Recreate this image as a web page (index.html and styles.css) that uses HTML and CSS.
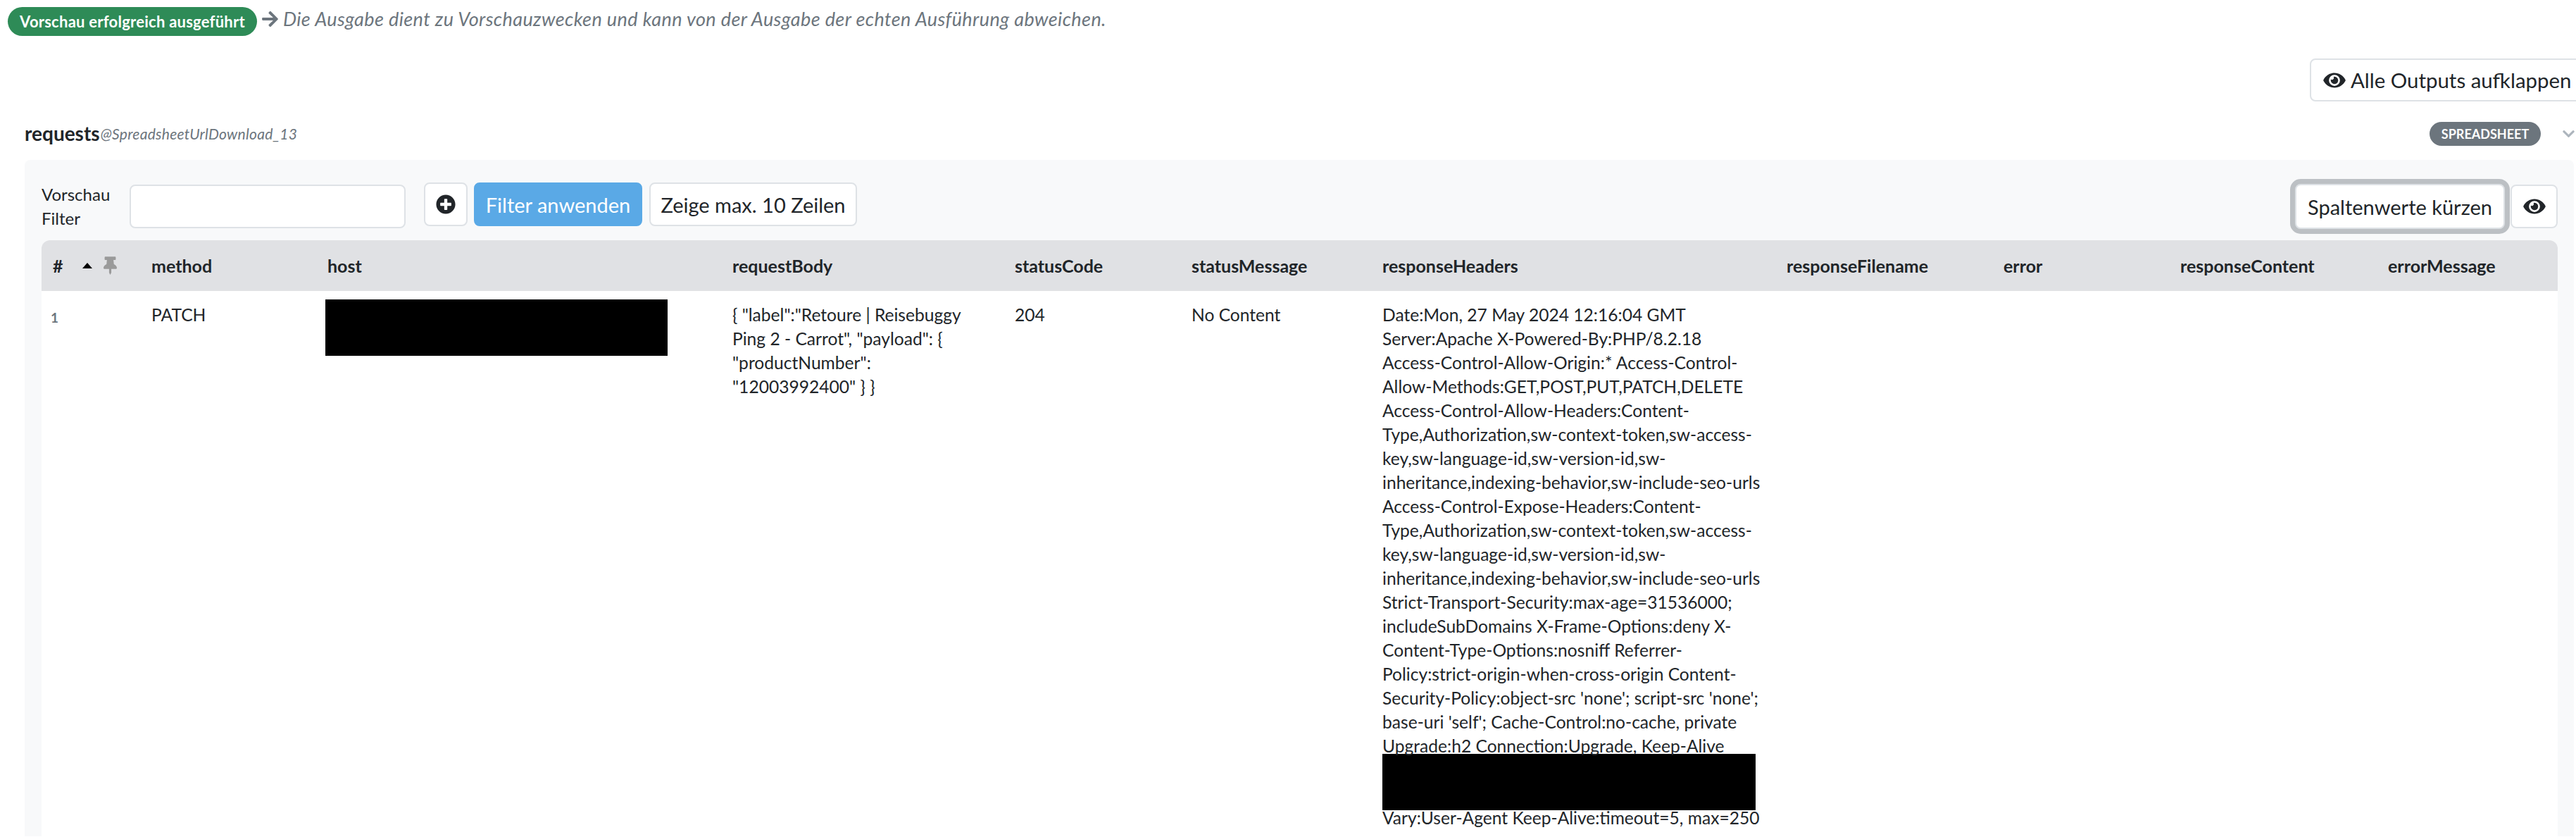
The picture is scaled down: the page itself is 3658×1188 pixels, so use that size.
FILE: index.html
```html
<!DOCTYPE html>
<html lang="de">
<head>
    <meta charset="UTF-8">
    <title>Vorschau</title>
    <link rel="stylesheet" href="styles.css">
</head>
<body>
    <div class="status-row">
        <span class="status-badge">Vorschau erfolgreich ausgeführt</span>
        <svg class="arrow-icon" viewBox="0 0 448 512"><path d="M190.5 66.9l22.2-22.2c9.4-9.4 24.6-9.4 33.9 0L441 239c9.4 9.4 9.4 24.6 0 33.9L246.6 467.3c-9.4 9.4-24.6 9.4-33.9 0l-22.2-22.2c-9.5-9.5-9.3-25 .4-34.3L311.4 296H24c-13.3 0-24-10.7-24-24v-32c0-13.3 10.7-24 24-24h287.4L190.9 101.2c-9.8-9.3-10-24.8-.4-34.3z"/></svg>
        <span class="status-note">Die Ausgabe dient zu Vorschauzwecken und kann von der Ausgabe der echten Ausführung abweichen.</span>
    </div>

    <div class="outputs-row">
        <button class="btn btn-outputs">
            <svg class="eye-icon" viewBox="0 0 576 512"><path d="M572.52 241.4C518.29 135.59 410.93 64 288 64S57.68 135.64 3.48 241.41a32.35 32.35 0 0 0 0 29.19C57.71 376.41 165.07 448 288 448s230.32-71.64 284.52-177.41a32.35 32.35 0 0 0 0-29.19zM288 400a144 144 0 1 1 144-144 143.93 143.93 0 0 1-144 144zm0-240a95.31 95.31 0 0 0-25.31 3.79 47.85 47.85 0 0 1-66.9 66.9A95.78 95.78 0 1 0 288 160z"/></svg>
            Alle Outputs aufklappen
        </button>
    </div>

    <div class="output-title">
        <span class="output-name">requests</span>
        <span class="output-id">@SpreadsheetUrlDownload_13</span>
        <span class="type-badge">SPREADSHEET</span>
        <svg class="chevron-icon" viewBox="0 0 448 512"><path d="M207.029 381.476L12.686 187.132c-9.373-9.373-9.373-24.569 0-33.941l22.667-22.667c9.357-9.357 24.522-9.375 33.901-.04L224 284.505l154.745-154.021c9.379-9.335 24.544-9.317 33.901.04l22.667 22.667c9.373 9.373 9.373 24.569 0 33.941L240.971 381.476c-9.373 9.372-24.569 9.372-33.942 0z"/></svg>
    </div>

    <div class="panel">
        <div class="filter-bar">
            <label class="filter-label">Vorschau<br>Filter</label>
            <input type="text" class="filter-input">
            <button class="btn btn-plus">
                <svg class="plus-icon" viewBox="0 0 512 512"><path d="M256 8C119 8 8 119 8 256s111 248 248 248 248-111 248-248S393 8 256 8zm144 276c0 6.6-5.4 12-12 12h-92v92c0 6.6-5.4 12-12 12h-56c-6.6 0-12-5.4-12-12v-92h-92c-6.6 0-12-5.4-12-12v-56c0-6.6 5.4-12 12-12h92v-92c0-6.6 5.4-12 12-12h56c6.6 0 12 5.4 12 12v92h92c6.6 0 12 5.4 12 12v56z"/></svg>
            </button>
            <button class="btn btn-apply">Filter anwenden</button>
            <button class="btn btn-limit">Zeige max. 10 Zeilen</button>
            <button class="btn btn-shorten">Spaltenwerte kürzen</button>
            <button class="btn btn-eye">
                <svg class="eye-icon" viewBox="0 0 576 512"><path d="M572.52 241.4C518.29 135.59 410.93 64 288 64S57.68 135.64 3.48 241.41a32.35 32.35 0 0 0 0 29.19C57.71 376.41 165.07 448 288 448s230.32-71.64 284.52-177.41a32.35 32.35 0 0 0 0-29.19zM288 400a144 144 0 1 1 144-144 143.93 143.93 0 0 1-144 144zm0-240a95.31 95.31 0 0 0-25.31 3.79 47.85 47.85 0 0 1-66.9 66.9A95.78 95.78 0 1 0 288 160z"/></svg>
            </button>
        </div>

        <table class="data-table">
            <colgroup>
                <col class="col-index">
                <col class="col-method">
                <col class="col-host">
                <col class="col-body">
                <col class="col-code">
                <col class="col-message">
                <col class="col-headers">
                <col class="col-filename">
                <col class="col-error">
                <col class="col-content">
                <col class="col-errormsg">
            </colgroup>
            <thead>
                <tr>
                    <th>
                        <div class="index-head">
                            <span>#</span>
                            <span class="sort-up"></span>
                            <svg class="pin-icon" viewBox="0 0 384 512"><path d="M298.028 214.267L285.793 96H328c13.255 0 24-10.745 24-24V24c0-13.255-10.745-24-24-24H56C42.745 0 32 10.745 32 24v48c0 13.255 10.745 24 24 24h42.207L85.972 214.267C37.465 236.82 0 277.261 0 328c0 13.255 10.745 24 24 24h136v104.007c0 1.242.289 2.467.845 3.578l24 48c2.941 5.882 11.364 5.893 14.311 0l24-48a8.008 8.008 0 0 0 .845-3.578V352h136c13.255 0 24-10.745 24-24-.001-51.183-37.983-91.42-85.973-113.733z"/></svg>
                        </div>
                    </th>
                    <th>method</th>
                    <th>host</th>
                    <th>requestBody</th>
                    <th>statusCode</th>
                    <th>statusMessage</th>
                    <th>responseHeaders</th>
                    <th>responseFilename</th>
                    <th>error</th>
                    <th>responseContent</th>
                    <th>errorMessage</th>
                </tr>
            </thead>
            <tbody>
                <tr>
                    <td class="row-index">1</td>
                    <td>PATCH</td>
                    <td><div class="redacted redacted-host"></div></td>
                    <td>{ "label":"Retoure | Reisebuggy<br>Ping 2 - Carrot", "payload": {<br>"productNumber":<br>"12003992400" } }</td>
                    <td>204</td>
                    <td>No Content</td>
                    <td>
                        Date:Mon, 27 May 2024 12:16:04 GMT<br>
                        Server:Apache X-Powered-By:PHP/8.2.18<br>
                        Access-Control-Allow-Origin:* Access-Control-<br>
                        Allow-Methods:GET,POST,PUT,PATCH,DELETE<br>
                        Access-Control-Allow-Headers:Content-<br>
                        Type,Authorization,sw-context-token,sw-access-<br>
                        key,sw-language-id,sw-version-id,sw-<br>
                        inheritance,indexing-behavior,sw-include-seo-urls<br>
                        Access-Control-Expose-Headers:Content-<br>
                        Type,Authorization,sw-context-token,sw-access-<br>
                        key,sw-language-id,sw-version-id,sw-<br>
                        inheritance,indexing-behavior,sw-include-seo-urls<br>
                        Strict-Transport-Security:max-age=31536000;<br>
                        includeSubDomains X-Frame-Options:deny X-<br>
                        Content-Type-Options:nosniff Referrer-<br>
                        Policy:strict-origin-when-cross-origin Content-<br>
                        Security-Policy:object-src 'none'; script-src 'none';<br>
                        base-uri 'self'; Cache-Control:no-cache, private<br>
                        Upgrade:h2 Connection:Upgrade, Keep-Alive
                        <div class="redacted redacted-headers"></div>
                        Vary:User-Agent Keep-Alive:timeout=5, max=250
                    </td>
                    <td></td>
                    <td></td>
                    <td></td>
                    <td></td>
                </tr>
            </tbody>
        </table>
    </div>
</body>
</html>
```

FILE: styles.css
```css
* {
    box-sizing: border-box;
}

html, body {
    margin: 0;
    height: 1188px;
    overflow: hidden;
}

body {
    background: #fff;
    color: #212529;
    font-family: "Lato", "Open Sans", sans-serif;
    font-size: 25px;
    line-height: 34px;
}

/* status line */
.status-row {
    display: flex;
    align-items: center;
    height: 41px;
    margin: 10px 0 0 11px;
}

.status-badge {
    display: block;
    width: 354px;
    height: 41px;
    background: #2e8b57;
    color: #fff;
    border-radius: 21px;
    font-size: 22px;
    font-weight: 700;
    letter-spacing: 0.25px;
    line-height: 41px;
    text-align: center;
    white-space: nowrap;
}

.arrow-icon {
    width: 23px;
    height: 26px;
    margin: -7px 0 0 7px;
    fill: #6c757d;
}

.status-note {
    margin: -7px 0 0 7px;
    color: #6c757d;
    font-size: 27px;
    font-style: italic;
    letter-spacing: 0.4px;
    white-space: nowrap;
}

/* buttons */
.btn {
    display: flex;
    align-items: center;
    justify-content: center;
    height: 62px;
    padding: 0;
    background: #fff;
    border: 2px solid #dee2e6;
    border-radius: 8px;
    color: #212529;
    font-family: inherit;
    font-size: 29px;
    white-space: nowrap;
}

.outputs-row {
    display: flex;
    margin-top: 32px;
    padding-left: 3280px;
}

.btn-outputs {
    flex: none;
    width: 390px;
    height: 61px;
    justify-content: flex-start;
    padding-left: 17px;
    gap: 7px;
    font-size: 29.4px;
}

.btn-outputs .eye-icon {
    width: 32px;
    height: 28px;
}

.eye-icon {
    fill: #212529;
}

/* title of the output */
.output-title {
    display: flex;
    align-items: center;
    height: 34px;
    margin-top: 29px;
    padding-left: 35px;
}

.output-name {
    font-size: 28px;
    font-weight: 700;
    margin-top: -2px;
}

.output-id {
    margin-left: 1px;
    color: #6c757d;
    font-size: 21px;
    font-style: italic;
    letter-spacing: 0.3px;
}

.type-badge {
    width: 158px;
    height: 34px;
    margin-left: auto;
    background: #6c757d;
    color: #fff;
    border-radius: 17px;
    font-size: 18px;
    font-weight: 700;
    line-height: 34px;
    text-align: center;
}

.chevron-icon {
    width: 17px;
    height: 20px;
    margin: 0 2px 0 31px;
    fill: #adb5bd;
}

/* panel */
.panel {
    height: 960px;
    margin: 20px 3px 0 35px;
    padding: 32px 23px 0 24px;
    background: #f8f9fa;
    border-radius: 8px 8px 0 0;
}

.filter-bar {
    display: flex;
    align-items: flex-start;
    height: 82px;
}

.filter-label {
    width: 125px;
    font-size: 24px;
}

.filter-input {
    width: 392px;
    height: 62px;
    margin: 3px 26px 0 0;
    background: #fff;
    border: 2px solid #dee2e6;
    border-radius: 8px;
}

.btn-plus {
    width: 62px;
    margin-right: 9px;
}

.plus-icon {
    width: 28px;
    height: 28px;
    fill: #212529;
}

.btn-apply {
    width: 239px;
    margin-right: 10px;
    background: #5aa9e6;
    border-color: #5aa9e6;
    color: #fff;
}

.btn-limit {
    width: 295px;
}

.btn-shorten {
    width: 298px;
    height: 64px;
    margin: 2px 8px 0 auto;
    box-shadow: 0 0 0 7px #bcc0c4;
}

.btn-eye {
    width: 67px;
    margin-top: 3px;
}

.btn-eye .eye-icon {
    width: 32px;
    height: 28px;
}

/* table */
.data-table {
    width: 3573px;
    table-layout: fixed;
    border-collapse: collapse;
}

.col-index { width: 140px; }
.col-method { width: 250px; }
.col-host { width: 575px; }
.col-body { width: 401px; }
.col-code { width: 251px; }
.col-message { width: 271px; }
.col-headers { width: 574px; }
.col-filename { width: 308px; }
.col-error { width: 251px; }
.col-content { width: 295px; }
.col-errormsg { width: 257px; }

.data-table th {
    height: 72px;
    padding: 0 0 0 16px;
    background: #e0e1e4;
    font-weight: 700;
    text-align: left;
}

.data-table th:first-child {
    border-top-left-radius: 12px;
}

.data-table th:last-child {
    border-top-right-radius: 12px;
}

.data-table td {
    padding: 17px 0 40px 16px;
    background: #fff;
    font-size: 24.6px;
    vertical-align: top;
    white-space: nowrap;
}

.index-head {
    display: flex;
    align-items: center;
}

.sort-up {
    width: 0;
    height: 0;
    margin: 0 16px 0 27px;
    border-left: 7px solid transparent;
    border-right: 7px solid transparent;
    border-bottom: 8px solid #000;
}

.pin-icon {
    width: 19px;
    height: 26px;
    fill: #9a9a9a;
}

.data-table td.row-index {
    padding: 21px 0 0 13px;
    color: #6c757d;
    font-size: 19px;
    font-weight: 700;
}

.redacted {
    height: 80px;
    background: #000;
}

.redacted-host {
    width: 486px;
    margin: -5px 0 0 -3px;
}

.redacted-headers {
    width: 530px;
    margin: -6px 0;
}
```
